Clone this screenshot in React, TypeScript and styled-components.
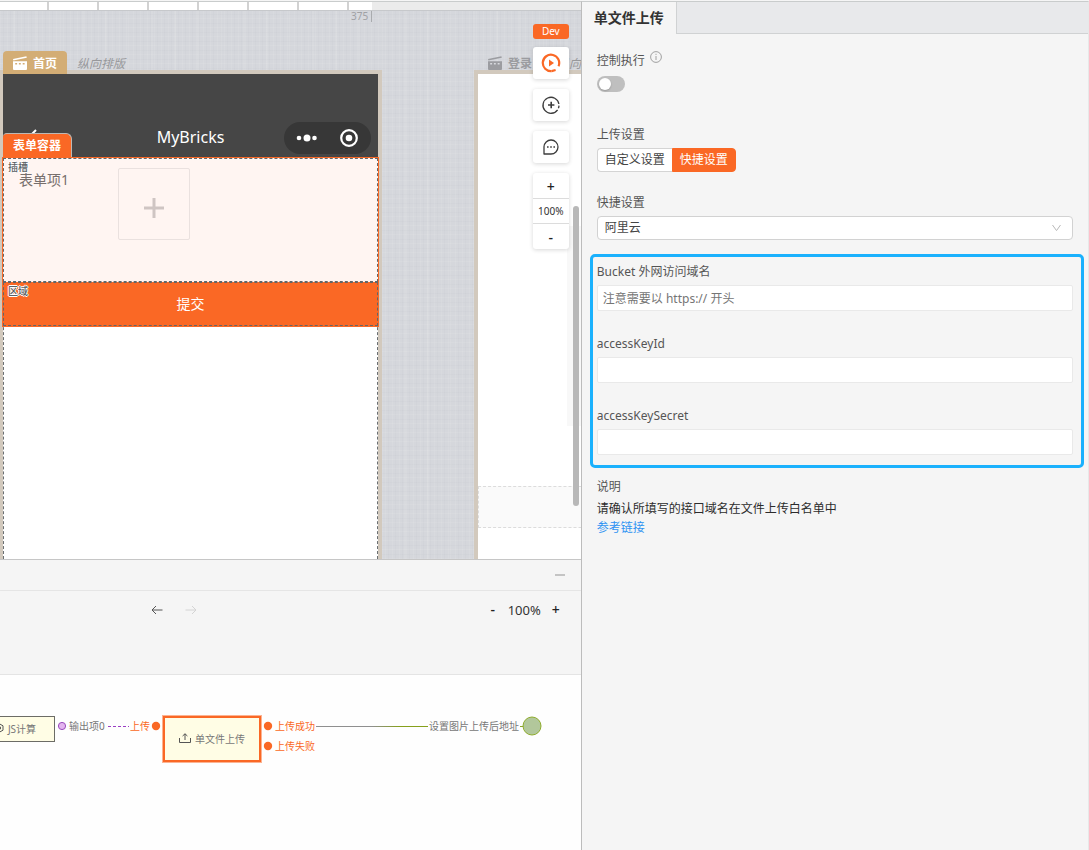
import React from "react";
import styled, { createGlobalStyle, css } from "styled-components";

const ORANGE = "#fa6825";
const FONT = `"Noto Sans", "Noto Sans CJK SC", sans-serif`;

const GlobalStyle = createGlobalStyle`
  *, *::before, *::after { box-sizing: border-box; }
  body { margin: 0; background: #f5f5f5; font-family: ${FONT}; font-size: 12px; color: #555; }
  button, input, select { font: inherit; color: inherit; margin: 0; }
  button { padding: 0; border: 0; background: none; cursor: pointer; }
  svg { display: block; }
`;

const Shell = styled.div`
  position: relative;
  min-height: 100vh;
  padding-top: 1px;
  display: grid;
  grid-template-columns: minmax(0, 8fr) minmax(0, 7fr);
`;

const Workspace = styled.main`
  display: flex;
  flex-direction: column;
  min-width: 0;
  border-top: 1px solid #c9cccc;
`;

/* ---------- design canvas ---------- */

const Canvas = styled.section`
  position: relative;
  flex: 1;
  min-height: 400px;
  overflow: hidden;
  background-color: #d5d7dc;
  background-image:
    repeating-linear-gradient(90deg, rgba(255, 255, 255, 0.07) 0 1px, transparent 1px 3px, rgba(120, 125, 140, 0.03) 3px 4px, transparent 4px 7px),
    repeating-linear-gradient(0deg, rgba(255, 255, 255, 0.07) 0 1px, transparent 1px 4px, rgba(120, 125, 140, 0.03) 4px 5px, transparent 5px 9px),
    repeating-linear-gradient(90deg, transparent 0 13px, rgba(255, 255, 255, 0.07) 13px 15px, transparent 15px 23px);
`;

const Ruler = styled.div`
  height: 9px;
  background: #ebebeb;
  border-bottom: 1px solid #c6c8cb;
`;

const RulerScale = styled.div`
  width: 372px;
  height: 8px;
  background: repeating-linear-gradient(90deg, #fff 0 47px, #d2d2d2 47px 49px, #fff 49px 50px);
`;

const RulerMark = styled.span`
  position: absolute;
  left: 351px;
  top: 9px;
  padding-right: 3px;
  border-right: 1px solid #a9abae;
  font-size: 10px;
  line-height: 11px;
  color: #a0a1a4;
`;

const Frame = styled.article<{ $x: number }>`
  position: absolute;
  left: ${(p) => p.$x}px;
  top: 68px;
  bottom: 0;
  width: 383px;
  border: 4px solid #d2c9bd;
  border-bottom: 0;
  background: #fff;
`;

const FrameTitle = styled.header`
  position: absolute;
  left: 0;
  bottom: 100%;
  display: flex;
  align-items: center;
  gap: 10px;
  white-space: nowrap;
`;

const FrameTab = styled.h2<{ $active?: boolean }>`
  display: flex;
  align-items: center;
  gap: 6px;
  height: 23px;
  min-width: ${(p) => (p.$active ? 64 : 69)}px;
  margin: 0;
  padding: 0 10px;
  border-radius: 4px 4px 0 0;
  font-size: 12px;
  font-weight: 700;
  color: ${(p) => (p.$active ? "#fff" : "#9b9ca0")};
  background: ${(p) => (p.$active ? "#d3ad75" : "transparent")};
`;

const FrameMode = styled.em`
  font-size: 12px;
  color: #97989b;
`;

const PhoneHeader = styled.div`
  position: relative;
  height: 84px;
  padding: 48px 7px 4px;
  display: grid;
  grid-template-columns: 1fr auto 1fr;
  align-items: start;
  background: #464646;
  color: #fff;
`;

const PhoneTitle = styled.h1`
  margin: 0;
  font-size: 16px;
  line-height: 31px;
  font-weight: 400;
`;

const BackIcon = styled.svg`
  margin: 7px 0 0 15px;
`;

const Capsule = styled.div`
  justify-self: end;
  width: 87px;
  height: 32px;
  border-radius: 16px;
  background: #373737;
`;

const SelectionTab = styled.div`
  position: absolute;
  left: 0;
  bottom: 0;
  height: 25px;
  padding: 0 10px;
  border: 1px solid #bdb8b4;
  border-width: 1px 1px 0 0;
  border-radius: 4px 6px 0 0;
  background: ${ORANGE};
  color: #fff;
  font-weight: 700;
  line-height: 24px;
`;

const Screen = styled.div`
  position: absolute;
  inset: 84px 0 0;
  border: 1px dashed #6a6f72;
  border-width: 0 1px;
`;

const Selection = styled.div`
  margin: -1px -2px 0;
  border: 1px solid ${ORANGE};
`;

const Slot = styled.div<{ $fill: string; $height: number }>`
  position: relative;
  height: ${(p) => p.$height}px;
  border: 1px dashed #62676a;
  background: ${(p) => p.$fill};
`;

const SlotTag = styled.span`
  position: absolute;
  left: 4px;
  top: 2px;
  font-size: 10px;
  line-height: 12px;
  font-weight: 500;
  color: #5c6165;
  text-shadow: 1px 0 0 #fff, -1px 0 0 #fff, 0 1px 0 #fff, 0 -1px 0 #fff;
`;

const FormItem = styled.div`
  display: grid;
  grid-template-columns: 99px auto;
  padding: 9px 0 0 15px;
  font-size: 14px;
  line-height: 24px;
  color: #776f6d;
`;

const UploadBox = styled.button`
  width: 72px;
  height: 72px;
  padding-top: 8px;
  display: grid;
  place-items: center;
  border: 1px solid #eae1df;
  border-radius: 2px;
`;

const Submit = styled.button`
  width: 100%;
  height: 100%;
  padding-bottom: 2px;
  font-size: 14px;
  color: #fff;
`;

const DashedArea = styled.div`
  position: absolute;
  top: 412px;
  left: 0;
  right: 0;
  height: 42px;
  border: 1px dashed #dcdcdc;
  background: #fafafa;
`;

const ToolRail = styled.div`
  position: absolute;
  top: 22px;
  right: 12px;
  width: 36px;
  display: flex;
  flex-direction: column;
  gap: 10px;
`;

const DevBadge = styled.span`
  height: 15px;
  margin-bottom: -2px;
  border-radius: 3px;
  background: ${ORANGE};
  color: #fff;
  font-size: 10px;
  line-height: 15px;
  text-align: center;
`;

const ToolButton = styled.button`
  height: 32px;
  display: grid;
  place-items: center;
  border-radius: 3px;
  background: #fff;
  box-shadow: 0 1px 4px rgba(0, 0, 0, 0.16);
`;

const ZoomGroup = styled.div`
  display: grid;
  grid-template-rows: 25px 26px 25px;
  border-radius: 3px;
  background: #fff;
  box-shadow: 0 1px 4px rgba(0, 0, 0, 0.16);
  text-align: center;
  color: #222;
`;

const ZoomValue = styled.output`
  border: 1px solid #dcdcdc;
  border-width: 1px 0;
  font-size: 10px;
  line-height: 24px;
  color: #333;
`;

const ZoomStep = styled.button`
  padding-top: 2px;
  font-size: 14px;
  line-height: 22px;
  font-weight: 500;
`;

const ScrollTrack = styled.div`
  position: absolute;
  right: 0;
  top: 224px;
  width: 14px;
  height: 200px;
  background: #f8f8f8;
`;

const ScrollThumb = styled.div`
  position: absolute;
  right: 2px;
  top: 204px;
  width: 6px;
  height: 300px;
  border-radius: 3px;
  background: #b8b8b8;
`;

/* ---------- logic panel ---------- */

const LogicPanel = styled.section`
  border-top: 1px solid #c6c6c6;
  background: #f5f5f5;
`;

const PanelBar = styled.div`
  height: 31px;
  padding-right: 16px;
  display: flex;
  align-items: center;
  justify-content: flex-end;
  border-bottom: 1px solid #e6e6e6;
`;

const CollapseButton = styled.button`
  width: 10px;
  height: 10px;
  display: grid;
  place-items: center;
  &::before { content: ""; width: 10px; height: 2px; background: #c4c4c4; }
`;

const LogicTools = styled.div`
  height: 84px;
  padding: 9px 19px 0 151px;
  display: flex;
  align-items: flex-start;
  justify-content: space-between;
  border-bottom: 1px solid #e4e4e4;
  box-shadow: 0 1px 2px rgba(0, 0, 0, 0.06);
`;

const ToolRow = styled.div<{ $gap: number }>`
  display: flex;
  align-items: center;
  gap: ${(p) => p.$gap}px;
  height: 20px;
  font-size: 13px;
  line-height: 20px;
  color: #333;
`;

const StepButton = styled.button`
  width: 12px;
  font-size: 14px;
  line-height: 20px;
  font-weight: 500;
  color: #222;
`;

const Flow = styled.div`
  position: relative;
  height: 175px;
  overflow: hidden;
  background: #fefefe;
  font-size: 10px;
`;

const Wires = styled.svg`
  position: absolute;
  left: 0;
  top: 0;
`;

const FlowNode = styled.div<{ $x: number; $y: number; $w: number; $h: number; $selected?: boolean }>`
  position: absolute;
  left: ${(p) => p.$x}px;
  top: ${(p) => p.$y}px;
  width: ${(p) => p.$w}px;
  height: ${(p) => p.$h}px;
  padding-bottom: 2px;
  display: flex;
  align-items: center;
  justify-content: center;
  gap: 4px;
  border: ${(p) => (p.$selected ? `2px solid ${ORANGE}` : "1px solid #6c6c66")};
  outline: ${(p) => (p.$selected ? "1px solid rgba(250, 104, 37, 0.5)" : "none")};
  background: #fffde5;
  color: #777;
  white-space: nowrap;
`;

const PortLabel = styled.span<{ $x: number; $y: number; $accent?: boolean }>`
  position: absolute;
  left: ${(p) => p.$x}px;
  top: ${(p) => p.$y}px;
  line-height: 14px;
  white-space: nowrap;
  color: ${(p) => (p.$accent ? ORANGE : "#777")};
`;

/* ---------- property sidebar ---------- */

const Sidebar = styled.aside`
  min-width: 0;
  border: 1px solid #c9cccc;
  border-width: 1px 1px 0 1px;
  border-left-color: #bcbcbc;
  border-right-color: #e8e8e8;
  background: #f5f5f5;
`;

const TabBar = styled.div`
  display: flex;
  height: 32px;
`;

const Tab = styled.h2`
  margin: 0;
  padding: 0 12px;
  font-size: 14px;
  line-height: 32px;
  font-weight: 700;
  color: #333;
`;

const TabFiller = styled.div`
  flex: 1;
  border: 1px solid #d0d2d3;
  border-width: 0 0 1px 1px;
  background: #e8e9eb;
`;

const Form = styled.form`
  padding: 17px 15px 0;
`;

const Field = styled.div<{ $space?: number }>`
  display: flex;
  flex-direction: column;
  align-items: stretch;
  gap: 3px;
  margin-bottom: ${(p) => p.$space ?? 0}px;
`;

const labelText = css`
  display: flex;
  gap: 5px;
  line-height: 20px;
  color: #555;
`;

const Label = styled.label`
  ${labelText}
`;

const Caption = styled.span`
  ${labelText}
`;

const Switch = styled.input`
  appearance: none;
  position: relative;
  width: 28px;
  height: 16px;
  margin: 2px 0 0;
  border-radius: 8px;
  background: #bfbfbf;
  &::before {
    content: "";
    position: absolute;
    left: 2px;
    top: 2px;
    width: 12px;
    height: 12px;
    border-radius: 50%;
    background: #fff;
    box-shadow: 0 1px 2px rgba(0, 0, 0, 0.2);
  }
  &:checked { background: ${ORANGE}; }
  &:checked::before { left: 14px; }
`;

const Segments = styled.div`
  display: flex;
  height: 24px;
`;

const Segment = styled.button<{ $on?: boolean }>`
  padding: 0 7px;
  border: 1px solid ${(p) => (p.$on ? ORANGE : "#d4d4d4")};
  background: ${(p) => (p.$on ? ORANGE : "#fff")};
  color: ${(p) => (p.$on ? "#fff" : "#444")};
  line-height: 22px;
  &:first-child { border-radius: 4px 0 0 4px; border-right: 0; }
  &:last-child { border-radius: 0 4px 4px 0; }
`;

const SelectWrap = styled.div`
  display: grid;
  align-items: center;
  & > * { grid-area: 1 / 1; }
  & > svg { justify-self: end; margin-right: 12px; pointer-events: none; }
`;

const Select = styled.select`
  appearance: none;
  height: 24px;
  padding: 0 7px 2px;
  border: 1px solid #d2d2d2;
  border-radius: 4px;
  background: #fff;
  color: #444;
`;

const Highlight = styled.fieldset`
  min-width: 0;
  margin: 0 -11px 9px -7px;
  padding: 5px 8px 10px 4px;
  border: 3px solid #1ab1fd;
  border-radius: 5px;
  display: flex;
  flex-direction: column;
  gap: 23px;
`;

const TextBox = styled.input`
  height: 26px;
  padding: 0 5px;
  border: 1px solid #e9e9e9;
  border-radius: 2px;
  background: #fff;
  &::placeholder { color: #757575; opacity: 1; }
`;

const Note = styled.p`
  margin: 2px 0 0;
  line-height: 20px;
  color: #2c2c2c;
`;

const DocLink = styled.a`
  line-height: 18px;
  color: #2f93f2;
  text-decoration: none;
`;

const Clapper = () => (
  <svg width="14" height="14" viewBox="0 0 14 14" fill="currentColor" aria-hidden="true">
    <path d="M0 3 13.4.2l.4 1.6L.4 4.4z" />
    <path
      fillRule="evenodd"
      d="M0 5.2h14V13a1 1 0 0 1-1 1H1a1 1 0 0 1-1-1zM2.2 7v1.4h1.9V7zm3.7 0v1.4h1.9V7zm3.8 0v1.4h1.9V7z"
    />
  </svg>
);

const fields = [
  { id: "bucket", label: "Bucket 外网访问域名", placeholder: "注意需要以 https:// 开头" },
  { id: "keyId", label: "accessKeyId", placeholder: "" },
  { id: "keySecret", label: "accessKeySecret", placeholder: "" },
];

function DesignCanvas() {
  return (
    <Canvas>
      <Ruler>
        <RulerScale />
      </Ruler>
      <RulerMark>375</RulerMark>

      <Frame $x={-1}>
        <FrameTitle>
          <FrameTab $active>
            <Clapper />
            首页
          </FrameTab>
          <FrameMode>纵向排版</FrameMode>
        </FrameTitle>
        <PhoneHeader>
          <BackIcon width="14" height="18" viewBox="0 0 14 18" fill="none" stroke="#fff" strokeWidth="2">
            <path d="M11 1 3 9l8 8" />
          </BackIcon>
          <PhoneTitle>MyBricks</PhoneTitle>
          <Capsule>
            <svg width="87" height="32" viewBox="0 0 87 32" fill="#fff">
              <circle cx="15" cy="16" r="2.3" />
              <circle cx="23" cy="16" r="3.5" />
              <circle cx="30.5" cy="16" r="2.3" />
              <circle cx="65" cy="16" r="7.8" fill="none" stroke="#fff" strokeWidth="2.2" />
              <circle cx="65" cy="16" r="3.3" />
            </svg>
          </Capsule>
          <SelectionTab>表单容器</SelectionTab>
        </PhoneHeader>
        <Screen>
          <Selection>
            <Slot $fill="#fff5f2" $height={124}>
              <SlotTag>插槽</SlotTag>
              <FormItem>
                <span>表单项1</span>
                <UploadBox type="button" aria-label="添加文件">
                  <svg width="22" height="22" viewBox="0 0 22 22" stroke="#cfc5c3" strokeWidth="3">
                    <path d="M11 1v20M1 11h20" />
                  </svg>
                </UploadBox>
              </FormItem>
            </Slot>
            <Slot $fill={ORANGE} $height={44}>
              <SlotTag>区域</SlotTag>
              <Submit type="button">提交</Submit>
            </Slot>
          </Selection>
        </Screen>
      </Frame>

      <Frame $x={474}>
        <FrameTitle>
          <FrameTab>
            <Clapper />
            登录
          </FrameTab>
          <FrameMode>纵向排版</FrameMode>
        </FrameTitle>
        <DashedArea />
      </Frame>

      <ScrollTrack />
      <ScrollThumb />

      <ToolRail>
        <DevBadge>Dev</DevBadge>
        <ToolButton aria-label="预览">
          <svg width="20" height="20" viewBox="0 0 20 20" fill="none" stroke={ORANGE} strokeWidth="2.2">
            <path d="M17.5 13.2A8.2 8.2 0 1 0 10.6 18.1" />
            <path d="M10.6 18.1 14.6 17" />
            <path d="M8 6.6v6.8l5-3.4z" fill={ORANGE} stroke="none" />
          </svg>
        </ToolButton>
        <ToolButton aria-label="新增">
          <svg width="20" height="20" viewBox="0 0 20 20" fill="none" stroke="#3c3c3c" strokeWidth="1.3">
            <path d="M16.6 14.8A8 8 0 1 1 17.9 9" />
            <path d="M18 10.6a8 8 0 0 1-.6 2.6" />
            <path d="M10.2 6.8v6.4M7 10h6.4" strokeWidth="1.6" />
          </svg>
        </ToolButton>
        <ToolButton aria-label="评论">
          <svg width="20" height="20" viewBox="0 0 20 20" fill="none" stroke="#3c3c3c" strokeWidth="1.3">
            <path d="M3 17V9.8A7 7 0 1 1 10 17z" strokeLinejoin="round" />
            <path d="M6 10h1.6M9.2 10h1.6M12.4 10H14" strokeWidth="1.6" />
          </svg>
        </ToolButton>
        <ZoomGroup>
          <ZoomStep aria-label="放大">+</ZoomStep>
          <ZoomValue>100%</ZoomValue>
          <ZoomStep aria-label="缩小">-</ZoomStep>
        </ZoomGroup>
      </ToolRail>
    </Canvas>
  );
}

function Logic() {
  return (
    <LogicPanel>
      <PanelBar>
        <CollapseButton aria-label="收起" />
      </PanelBar>
      <LogicTools>
        <ToolRow $gap={22}>
          <button aria-label="撤销">
            <svg width="12" height="10" viewBox="0 0 12 10" fill="none" stroke="#555">
              <path d="M1 5h10.5M5 1 1 5l4 4" />
            </svg>
          </button>
          <button aria-label="重做" disabled>
            <svg width="12" height="10" viewBox="0 0 12 10" fill="none" stroke="#d4d4d4">
              <path d="M11 5H.5M7 1l4 4-4 4" />
            </svg>
          </button>
        </ToolRow>
        <ToolRow $gap={9}>
          <StepButton aria-label="缩小画布">-</StepButton>
          <output>100%</output>
          <StepButton aria-label="放大画布">+</StepButton>
        </ToolRow>
      </LogicTools>
      <Flow>
        <Wires width="560" height="100" viewBox="0 0 560 100" fill="none">
          <defs>
            <linearGradient id="wire" gradientUnits="userSpaceOnUse" x1="316" y1="0" x2="428" y2="0">
              <stop offset="0.5" stopColor="#8f8f8f" />
              <stop offset="0.75" stopColor="#86a01c" />
            </linearGradient>
          </defs>
          <path d="M108 51.5h21" stroke="#9a3fc4" strokeDasharray="3 2" />
          <path d="M316 51.5h112" stroke="url(#wire)" />
          <path d="M520 51.5h4" stroke="#8aa52a" />
          <circle cx="62" cy="51" r="3.6" fill="#e3b4ef" stroke="#9a4bbd" />
          <circle cx="156" cy="51" r="4.2" fill={ORANGE} />
          <circle cx="268" cy="51" r="4.2" fill={ORANGE} />
          <circle cx="268" cy="71" r="4.2" fill={ORANGE} />
          <circle cx="532" cy="51" r="9" fill="#b2c79b" stroke="#8fac2e" />
        </Wires>
        <FlowNode $x={-25} $y={41} $w={80} $h={26}>
          <svg width="10" height="10" viewBox="0 0 10 10" fill="none" stroke="#555">
            <path d="M5 .6 9 2.8v4.4L5 9.4 1 7.2V2.8z" />
            <circle cx="5" cy="5" r="1.6" />
          </svg>
          JS计算
        </FlowNode>
        <PortLabel $x={69} $y={44}>输出项0</PortLabel>
        <PortLabel $x={130} $y={44} $accent>上传</PortLabel>
        <FlowNode $x={163} $y={41} $w={98} $h={46} $selected>
          <svg width="12" height="10" viewBox="0 0 12 10" fill="none" stroke="#555">
            <path d="M.5 5v4.5h11V5M6 7V.8M3.6 3 6 .8 8.4 3" />
          </svg>
          单文件上传
        </FlowNode>
        <PortLabel $x={275} $y={44} $accent>上传成功</PortLabel>
        <PortLabel $x={275} $y={64} $accent>上传失败</PortLabel>
        <PortLabel $x={429} $y={44}>设置图片上传后地址</PortLabel>
      </Flow>
    </LogicPanel>
  );
}

function Properties() {
  return (
    <Sidebar>
      <TabBar>
        <Tab>单文件上传</Tab>
        <TabFiller />
      </TabBar>
      <Form onSubmit={(e) => e.preventDefault()}>
        <Field $space={33}>
          <Label htmlFor="control">
            控制执行
            <svg width="12" height="12" viewBox="0 0 12 12" fill="none" stroke="#8c8c8c" strokeWidth="0.8">
              <circle cx="6" cy="6" r="5.4" />
              <path d="M6 5v4M6 2.8v1.1" />
            </svg>
          </Label>
          <Switch id="control" type="checkbox" role="switch" />
        </Field>
        <Field $space={21}>
          <Caption>上传设置</Caption>
          <Segments>
            <Segment type="button">自定义设置</Segment>
            <Segment type="button" $on>快捷设置</Segment>
          </Segments>
        </Field>
        <Field $space={14}>
          <Label htmlFor="preset">快捷设置</Label>
          <SelectWrap>
            <Select id="preset" defaultValue="aliyun">
              <option value="aliyun">阿里云</option>
            </Select>
            <svg width="9" height="8" viewBox="0 0 9 8" fill="none" stroke="#b8b8b8">
              <path d="M.5 1 4.5 6.6 8.5 1" />
            </svg>
          </SelectWrap>
        </Field>
        <Highlight>
          {fields.map((f) => (
            <Field key={f.id}>
              <Label htmlFor={f.id}>{f.label}</Label>
              <TextBox id={f.id} type="text" placeholder={f.placeholder} />
            </Field>
          ))}
        </Highlight>
        <Caption>说明</Caption>
        <Note>请确认所填写的接口域名在文件上传白名单中</Note>
        <DocLink href="#reference">参考链接</DocLink>
      </Form>
    </Sidebar>
  );
}

export default function App() {
  return (
    <>
      <GlobalStyle />
      <Shell>
        <Workspace>
          <DesignCanvas />
          <Logic />
        </Workspace>
        <Properties />
      </Shell>
    </>
  );
}
